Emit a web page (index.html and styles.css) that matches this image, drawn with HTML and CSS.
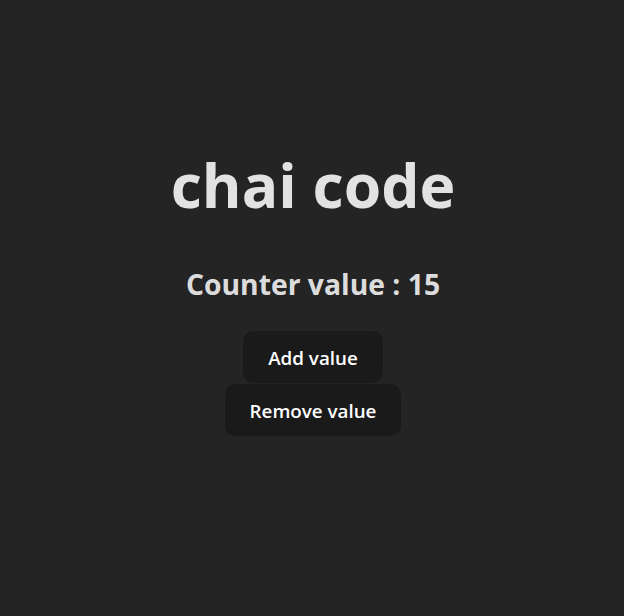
FILE: index.html
```html
<!DOCTYPE html>
<html lang="en">
<head>
<meta charset="UTF-8">
<title>chai code</title>
<link rel="stylesheet" href="styles.css">
</head>
<body>
<main class="app">
  <h1 class="title">chai code</h1>
  <h2 class="counter">Counter value : 15</h2>
  <div class="actions">
    <button class="btn">Add value</button>
    <button class="btn">Remove value</button>
  </div>
</main>
</body>
</html>
```
FILE: styles.css
```css
html, body {
  margin: 0;
  padding: 0;
}
body {
  background: #242424;
  color: rgba(255, 255, 255, 0.87);
  font-family: "Open Sans", "Noto Sans", sans-serif;
  min-height: 100vh;
}
.app {
  display: flex;
  flex-direction: column;
  align-items: center;
  padding-top: 150px;
  padding-left: 2px;
}
.title {
  margin: 0 0 44px;
  font-size: 60.6px;
  line-height: 70px;
  font-weight: 700;
}
.counter {
  margin: 0 0 27px;
  font-size: 28.3px;
  line-height: 40px;
  font-weight: 700;
}
.actions {
  display: flex;
  flex-direction: column;
  align-items: center;
  gap: 1px;
}
.btn {
  font-family: inherit;
  font-size: 18.8px;
  font-weight: 600;
  line-height: 26px;
  padding: 13px 24px 11px;
  border: 1px solid transparent;
  border-radius: 10px;
  background: #1a1a1a;
  color: #ffffff;
  cursor: pointer;
}
```
